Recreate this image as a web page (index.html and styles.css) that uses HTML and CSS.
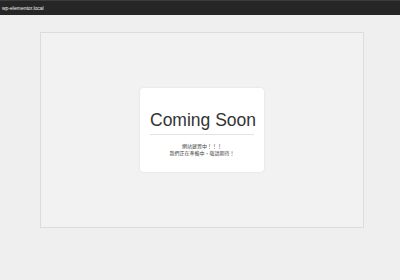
FILE: index.html
```html
<!DOCTYPE html>
<html lang="zh-Hant">
<head>
  <meta charset="UTF-8" />
  <meta name="viewport" content="width=device-width, initial-scale=1.0"/>
  <title>Coming Soon</title>
  <link rel="stylesheet" href="styles.css">
</head>
<body>
  <div class="topbar">wp-elementor.local</div>

  <div class="page">
    <div class="frame">
      <div class="card">
        <h1>Coming Soon</h1>
        <p>網站建置中！！！<br>我們正在準備中，敬請期待！</p>
      </div>
    </div>
  </div>
</body>
</html>
```

FILE: styles.css
```css
body {
  margin: 0;
  font-family: 'Liberation Sans', 'Noto Sans CJK TC', sans-serif;
  background: #efefef;
  color: #333;
}

.topbar {
  height: 14px;
  background: #262626;
  border-top: 1px solid #3c3c3c;
  color: #f2f2f2;
  font-size: 5px;
  line-height: 14px;
  padding-left: 2px;
}

.page {
  padding: 17px 36px 0 40px;
}

.frame {
  height: 194px;
  border: 1px solid #dcdcdc;
  background: #f2f2f2;
  display: flex;
  align-items: center;
  justify-content: center;
}

.card {
  width: 124px;
  height: 84px;
  box-sizing: border-box;
  background: #fff;
  border-radius: 4px;
  box-shadow: 0 0 3px rgba(0,0,0,0.08);
  padding: 21px 10px 0;
  text-align: center;
}

h1 {
  margin: 0;
  font-size: 17.5px;
  font-weight: normal;
  line-height: 22px;
  white-space: nowrap;
  padding-bottom: 3px;
  border-bottom: 1px solid #e2e2e2;
}

p {
  margin: 8px 0 0;
  font-size: 5px;
  line-height: 7px;
  color: #444;
}
```
